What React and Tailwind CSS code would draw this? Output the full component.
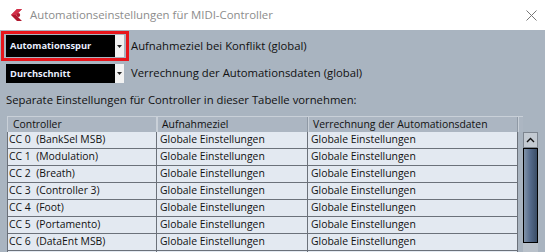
import React from 'react';

const rows = [
    ['CC 0', 'BankSel MSB'],
    ['CC 1', 'Modulation'],
    ['CC 2', 'Breath'],
    ['CC 3', 'Controller 3'],
    ['CC 4', 'Foot'],
    ['CC 5', 'Portamento'],
    ['CC 6', 'DataEnt MSB'],
];

function CubaseLogo() {
    return (
        <svg width="14" height="14" viewBox="0 0 14 14">
            <path d="M8 1 L13 1 L7 7 L13 13 L8 13 L2 7 Z" fill="#b0182e" />
            <path d="M8 1 L13 1 L7 7 L2 7 Z" fill="#d4304a" />
            <circle cx="9.3" cy="7" r="1.9" fill="#b0182e" />
        </svg>
    );
}

function Dropdown({ label }) {
    return (
        <div className="flex h-full w-[118px] bg-black">
            <div className="flex-1 flex items-center pl-[4px] text-[9.3px] font-bold text-[#e8eeff] font-['Open_Sans',sans-serif]">
                {label}
            </div>
            <div className="w-[9px] bg-[#f2f2f2] flex items-center justify-center">
                <svg width="5" height="3" viewBox="0 0 5 3">
                    <path d="M0 0 L5 0 L2.5 3 Z" fill="#222" />
                </svg>
            </div>
        </div>
    );
}

export default function App() {
    return (
        <div className="w-[545px] h-[252px] overflow-hidden bg-[#a9b4c0] font-['Open_Sans',sans-serif] text-[11.3px] text-[#111]">
            {/* title bar */}
            <div className="h-[30px] bg-white flex items-center">
                <div className="ml-[9px] w-[14px] flex items-center">
                    <CubaseLogo />
                </div>
                <span className="ml-[7px] text-[11.4px] text-[#8c8c8c]">
                    Automationseinstellungen für MIDI-Controller
                </span>
                <div className="ml-auto mr-[8px] w-[11px] h-[11px]">
                    <svg width="11" height="11" viewBox="0 0 11 11">
                        <path d="M0.5 0.5 L10.5 10.5 M10.5 0.5 L0.5 10.5" stroke="#777" strokeWidth="1" />
                    </svg>
                </div>
            </div>

            {/* settings */}
            <div className="pt-px">
                <div className="h-[30px] flex items-center">
                    <div className="ml-px w-[128px] h-[30px] border-[3px] border-[#e8151b] p-[1px] pl-[2px]">
                        <Dropdown label="Automationsspur" />
                    </div>
                    <span className="ml-[2px]">Aufnahmeziel bei Konflikt (global)</span>
                </div>
                <div className="mt-[3px] h-[19px] flex items-center">
                    <div className="ml-[6px] h-[19px]">
                        <Dropdown label="Durchschnitt" />
                    </div>
                    <span className="ml-[7px]">Verrechnung der Automationsdaten (global)</span>
                </div>
                <div className="mt-[9px] h-[16px] flex items-center pl-[6px]">
                    Separate Einstellungen für Controller in dieser Tabelle vornehmen:
                </div>
            </div>

            {/* table */}
            <div className="mt-[8px] ml-[7px] flex text-[10.4px]">
                <div className="w-[516px]">
                    <div className="flex h-[16px] bg-[#acb6c2] border-t border-[#c9d0d8]">
                        <div className="w-[150px] border-l border-r border-[#c9d0d8] flex items-center pl-[5px]">Controller</div>
                        <div className="w-[151px] border-l border-r border-[#8f99a5] border-l-[#c9d0d8] flex items-center pl-[4px]">Aufnahmeziel</div>
                        <div className="w-[210px] border-l border-r border-[#8f99a5] border-l-[#c9d0d8] flex items-center pl-[4px]">Verrechnung der Automationsdaten</div>
                        <div className="w-[5px] border-l border-[#c9d0d8]" />
                    </div>
                    <div className="w-[511px] h-[130px] bg-[#e3e9f1] border-l border-[#6b717a]">
                        {rows.map(([cc, name]) => (
                            <div key={cc} className="flex h-[17px] border-b border-[#6b717a]">
                                <div className="w-[149px] border-r border-[#6b717a] flex items-center pl-[1px] whitespace-pre">
                                    {cc}  ({name})
                                </div>
                                <div className="w-[151px] border-r border-[#6b717a] flex items-center pl-[3px]">Globale Einstellungen</div>
                                <div className="w-[210px] border-r border-[#6b717a] flex items-center pl-[3px]">Globale Einstellungen</div>
                            </div>
                        ))}
                        <div className="flex h-[10px]">
                            <div className="w-[149px] border-r border-[#6b717a]" />
                            <div className="w-[151px] border-r border-[#6b717a]" />
                            <div className="w-[210px] border-r border-[#6b717a]" />
                        </div>
                    </div>
                </div>

                {/* scrollbar */}
                <div className="mt-[16px] w-[15px] flex flex-col">
                    <div className="h-[16px] bg-[#c3cad2] border border-[#7d858f] flex items-center justify-center">
                        <svg width="9" height="6" viewBox="0 0 9 6">
                            <path d="M1 5 L4.5 1.5 L8 5" stroke="#111" strokeWidth="1.4" fill="none" />
                        </svg>
                    </div>
                    <div className="h-[95px] border border-black bg-gradient-to-r from-[#8193a8] via-[#53698a] to-[#3a4d66]" />
                    <div className="h-[20px] bg-[#b9c1ca]" />
                </div>
            </div>
        </div>
    );
}
